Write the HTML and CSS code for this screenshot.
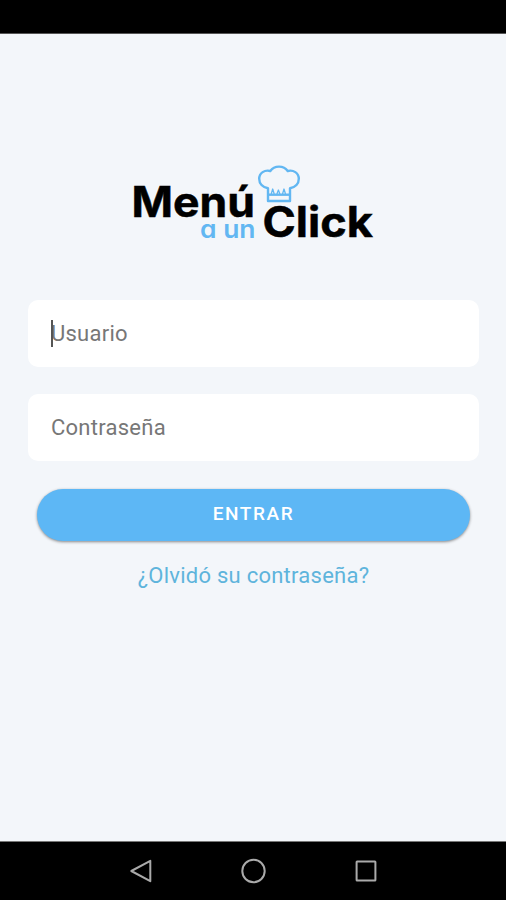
FILE: index.html
```html
<!DOCTYPE html>
<html lang="es">
<head>
<meta charset="utf-8">
<meta name="viewport" content="width=device-width">
<title>Menú a un Click</title>
<link rel="stylesheet" href="styles.css">
</head>
<body>
<div class="screen">
  <div class="status-bar"></div>
  <main class="login">
    <svg class="logo" viewBox="124 155 260 95" role="img" aria-label="Menú a un Click">
      <text class="logo-main" x="131.500" y="216.500" textLength="123.500" lengthAdjust="spacingAndGlyphs">Menú</text>
      <text class="logo-sub" x="200" y="237.500" textLength="55.500" lengthAdjust="spacingAndGlyphs">a un</text>
      <text class="logo-main" x="262.500" y="236.500" textLength="110.500" lengthAdjust="spacingAndGlyphs">Click</text>
      <g class="hat">
        <path d="M268 201V188.200C262.500 187.300 259.200 183.600 259.200 178.800C259.200 173 264.700 169.400 270.300 171C272.200 168.200 275.400 166.600 279 166.600S285.800 168.200 287.700 171C293.300 169.400 298.800 173 298.800 178.800C298.800 183.600 295.500 187.300 290 188.200V201Z"/>
        <path d="M268 194.700H290"/>
        <path class="hat-fold" d="M271.200 194L272.700 189L274.200 194M276.900 194L278.400 190L279.900 194M282.500 194L284 189L285.500 194"/>
      </g>
    </svg>
    <form class="form">
      <div class="field"><span class="caret"></span>Usuario</div>
      <div class="field">Contraseña</div>
      <button class="submit" type="button">ENTRAR</button>
      <a class="forgot">¿Olvidó su contraseña?</a>
    </form>
  </main>
  <nav class="nav-bar">
    <svg viewBox="0 0 26 26"><path d="M23.300 2.800V23.200L4.300 13Z"/></svg>
    <svg viewBox="0 0 26 26"><circle cx="13.500" cy="13" r="11.200"/></svg>
    <svg viewBox="0 0 26 26"><rect x="3.600" y="3.400" width="18.800" height="19.200" rx=".5"/></svg>
  </nav>
</div>
</body>
</html>
```

FILE: styles.css
```css
* { box-sizing: border-box; }
body { margin: 0; font-family: Roboto, sans-serif; }
.screen {
  height: 900px;
  display: flex;
  flex-direction: column;
  background: #f3f6fa;
}
.status-bar {
  height: 34px;
  background: #000;
  border-bottom: 1px solid #555;
}
.login {
  flex: 1;
  display: flex;
  flex-direction: column;
  padding: 121px 27px 0 28px;
}
.logo {
  width: 260px;
  height: 95px;
  margin-left: 96px;
}
.logo-main {
  font: 700 42px Inter, sans-serif;
  stroke: #000;
  stroke-width: .5;
}
.logo-sub {
  font: 600 24.500px Inter, sans-serif;
  font-feature-settings: "cv11";
  fill: #62b7f2;
}
.hat {
  fill: none;
  stroke: #62b7f2;
  stroke-width: 2.400;
  stroke-linejoin: round;
}
.hat-fold { stroke-width: 1.300; }
.form {
  display: flex;
  flex-direction: column;
  margin-top: 50px;
}
.field {
  position: relative;
  height: 67px;
  margin-bottom: 27px;
  padding-left: 23px;
  border-radius: 10px;
  background: #fff;
  color: #777;
  font-size: 22px;
  line-height: 67px;
  letter-spacing: .25px;
}
.caret {
  position: absolute;
  left: 23px;
  top: 20px;
  width: 1.500px;
  height: 27px;
  background: #555;
}
.submit {
  height: 52px;
  margin: 1px 9px 0;
  padding: 0 0 3px;
  border: 0;
  border-radius: 26px;
  background: #5db7f5;
  box-shadow: 0 1px 3px rgba(0, 0, 0, .45);
  color: #fff;
  font: 500 19px Roboto, sans-serif;
  letter-spacing: 1.600px;
}
.forgot {
  margin-top: 21px;
  color: #5eb4dc;
  font-size: 22px;
  line-height: 28px;
  letter-spacing: .25px;
  text-align: center;
}
.nav-bar {
  height: 59px;
  display: flex;
  justify-content: center;
  align-items: center;
  gap: 87px;
  border-top: 1px solid #777;
  background: #000;
}
.nav-bar svg {
  width: 26px;
  height: 26px;
  fill: none;
  stroke: #aaa;
  stroke-width: 2;
  stroke-linejoin: round;
}
```
